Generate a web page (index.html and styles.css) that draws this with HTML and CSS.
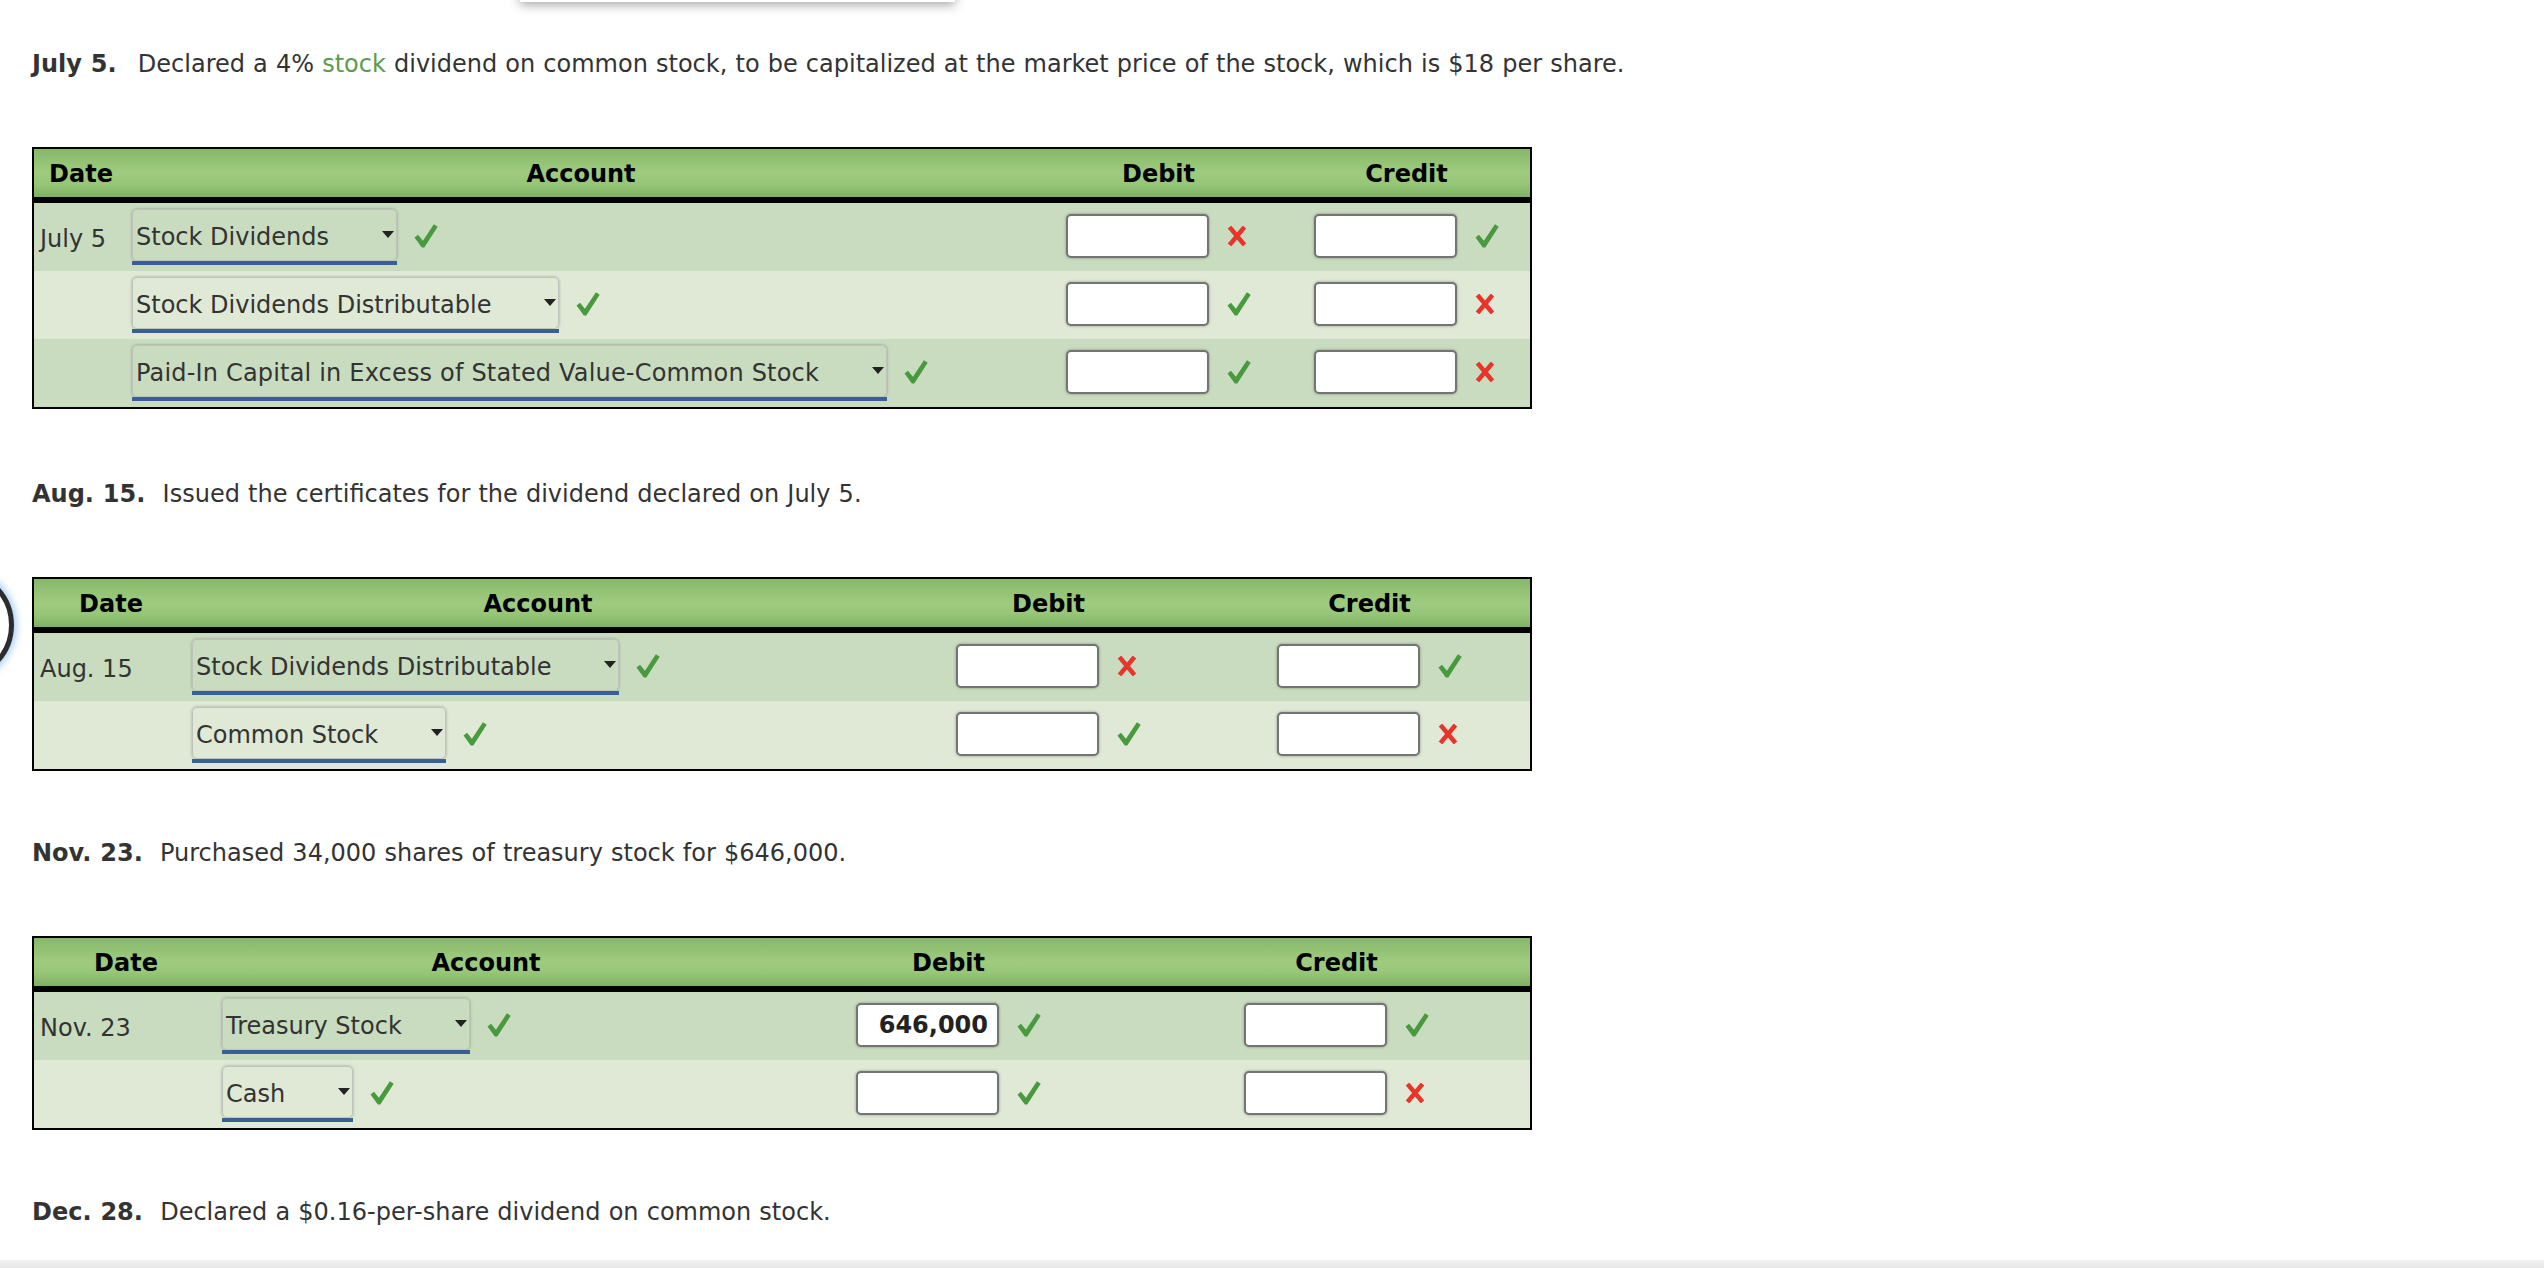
FILE: index.html
```html
<!DOCTYPE html>
<html lang="en">
<head>
<meta charset="utf-8">
<title>Journal entries</title>
<link rel="stylesheet" href="styles.css">
</head>
<body>
<div class="top-popup"></div>
<div class="focus-ring"></div>

<main class="page">
  <p class="prompt"><b class="wide">July 5.</b>&nbsp; Declared a 4% <span class="term">stock</span> dividend on common stock, to be capitalized at the market price of the stock, which is $18 per share.</p>
  <table class="journal j1">
    <colgroup><col class="c-date"><col class="c-acct"><col class="c-debit"><col class="c-credit"></colgroup>
    <thead><tr><th>Date</th><th>Account</th><th>Debit</th><th>Credit</th></tr></thead>
    <tbody>
      <tr>
        <td class="date">July 5</td>
        <td><div class="cell acct"><span class="select">Stock Dividends<i class="caret"></i></span><svg class="mark ok" viewBox="0 0 24 24"><path d="M0.5 13.4 L4 10.7 L8.9 16.8 L19.9 0.3 L23.7 2.8 L10.3 23.6 L7.8 23.6 Z"/></svg></div></td>
        <td><div class="cell amt"><span class="input"></span><svg class="mark bad" viewBox="0 0 20 20"><path d="M2.5 1 Q10 10 17.5 19 M17.5 1 Q10 10 2.5 19"/></svg></div></td>
        <td><div class="cell amt"><span class="input"></span><svg class="mark ok" viewBox="0 0 24 24"><path d="M0.5 13.4 L4 10.7 L8.9 16.8 L19.9 0.3 L23.7 2.8 L10.3 23.6 L7.8 23.6 Z"/></svg></div></td>
      </tr>
      <tr>
        <td class="date"></td>
        <td><div class="cell acct"><span class="select">Stock Dividends Distributable<i class="caret"></i></span><svg class="mark ok" viewBox="0 0 24 24"><path d="M0.5 13.4 L4 10.7 L8.9 16.8 L19.9 0.3 L23.7 2.8 L10.3 23.6 L7.8 23.6 Z"/></svg></div></td>
        <td><div class="cell amt"><span class="input"></span><svg class="mark ok" viewBox="0 0 24 24"><path d="M0.5 13.4 L4 10.7 L8.9 16.8 L19.9 0.3 L23.7 2.8 L10.3 23.6 L7.8 23.6 Z"/></svg></div></td>
        <td><div class="cell amt"><span class="input"></span><svg class="mark bad" viewBox="0 0 20 20"><path d="M2.5 1 Q10 10 17.5 19 M17.5 1 Q10 10 2.5 19"/></svg></div></td>
      </tr>
      <tr>
        <td class="date"></td>
        <td><div class="cell acct"><span class="select long">Paid-In Capital in Excess of Stated Value-Common Stock<i class="caret"></i></span><svg class="mark ok" viewBox="0 0 24 24"><path d="M0.5 13.4 L4 10.7 L8.9 16.8 L19.9 0.3 L23.7 2.8 L10.3 23.6 L7.8 23.6 Z"/></svg></div></td>
        <td><div class="cell amt"><span class="input"></span><svg class="mark ok" viewBox="0 0 24 24"><path d="M0.5 13.4 L4 10.7 L8.9 16.8 L19.9 0.3 L23.7 2.8 L10.3 23.6 L7.8 23.6 Z"/></svg></div></td>
        <td><div class="cell amt"><span class="input"></span><svg class="mark bad" viewBox="0 0 20 20"><path d="M2.5 1 Q10 10 17.5 19 M17.5 1 Q10 10 2.5 19"/></svg></div></td>
      </tr>
    </tbody>
  </table>

  <p class="prompt"><b>Aug. 15.</b>&nbsp; Issued the certificates for the dividend declared on July 5.</p>
  <table class="journal j2">
    <colgroup><col class="c-date"><col class="c-acct"><col class="c-debit"><col class="c-credit"></colgroup>
    <thead><tr><th>Date</th><th>Account</th><th>Debit</th><th>Credit</th></tr></thead>
    <tbody>
      <tr>
        <td class="date">Aug. 15</td>
        <td><div class="cell acct"><span class="select">Stock Dividends Distributable<i class="caret"></i></span><svg class="mark ok" viewBox="0 0 24 24"><path d="M0.5 13.4 L4 10.7 L8.9 16.8 L19.9 0.3 L23.7 2.8 L10.3 23.6 L7.8 23.6 Z"/></svg></div></td>
        <td><div class="cell amt"><span class="input"></span><svg class="mark bad" viewBox="0 0 20 20"><path d="M2.5 1 Q10 10 17.5 19 M17.5 1 Q10 10 2.5 19"/></svg></div></td>
        <td><div class="cell amt"><span class="input"></span><svg class="mark ok" viewBox="0 0 24 24"><path d="M0.5 13.4 L4 10.7 L8.9 16.8 L19.9 0.3 L23.7 2.8 L10.3 23.6 L7.8 23.6 Z"/></svg></div></td>
      </tr>
      <tr>
        <td class="date"></td>
        <td><div class="cell acct"><span class="select">Common Stock<i class="caret"></i></span><svg class="mark ok" viewBox="0 0 24 24"><path d="M0.5 13.4 L4 10.7 L8.9 16.8 L19.9 0.3 L23.7 2.8 L10.3 23.6 L7.8 23.6 Z"/></svg></div></td>
        <td><div class="cell amt"><span class="input"></span><svg class="mark ok" viewBox="0 0 24 24"><path d="M0.5 13.4 L4 10.7 L8.9 16.8 L19.9 0.3 L23.7 2.8 L10.3 23.6 L7.8 23.6 Z"/></svg></div></td>
        <td><div class="cell amt"><span class="input"></span><svg class="mark bad" viewBox="0 0 20 20"><path d="M2.5 1 Q10 10 17.5 19 M17.5 1 Q10 10 2.5 19"/></svg></div></td>
      </tr>
    </tbody>
  </table>

  <p class="prompt"><b>Nov. 23.</b>&nbsp; Purchased 34,000 shares of treasury stock for $646,000.</p>
  <table class="journal j3">
    <colgroup><col class="c-date"><col class="c-acct"><col class="c-debit"><col class="c-credit"></colgroup>
    <thead><tr><th>Date</th><th>Account</th><th>Debit</th><th>Credit</th></tr></thead>
    <tbody>
      <tr>
        <td class="date">Nov. 23</td>
        <td><div class="cell acct"><span class="select">Treasury Stock<i class="caret"></i></span><svg class="mark ok" viewBox="0 0 24 24"><path d="M0.5 13.4 L4 10.7 L8.9 16.8 L19.9 0.3 L23.7 2.8 L10.3 23.6 L7.8 23.6 Z"/></svg></div></td>
        <td><div class="cell amt"><span class="input">646,000</span><svg class="mark ok" viewBox="0 0 24 24"><path d="M0.5 13.4 L4 10.7 L8.9 16.8 L19.9 0.3 L23.7 2.8 L10.3 23.6 L7.8 23.6 Z"/></svg></div></td>
        <td><div class="cell amt"><span class="input"></span><svg class="mark ok" viewBox="0 0 24 24"><path d="M0.5 13.4 L4 10.7 L8.9 16.8 L19.9 0.3 L23.7 2.8 L10.3 23.6 L7.8 23.6 Z"/></svg></div></td>
      </tr>
      <tr>
        <td class="date"></td>
        <td><div class="cell acct"><span class="select">Cash<i class="caret"></i></span><svg class="mark ok" viewBox="0 0 24 24"><path d="M0.5 13.4 L4 10.7 L8.9 16.8 L19.9 0.3 L23.7 2.8 L10.3 23.6 L7.8 23.6 Z"/></svg></div></td>
        <td><div class="cell amt"><span class="input"></span><svg class="mark ok" viewBox="0 0 24 24"><path d="M0.5 13.4 L4 10.7 L8.9 16.8 L19.9 0.3 L23.7 2.8 L10.3 23.6 L7.8 23.6 Z"/></svg></div></td>
        <td><div class="cell amt"><span class="input"></span><svg class="mark bad" viewBox="0 0 20 20"><path d="M2.5 1 Q10 10 17.5 19 M17.5 1 Q10 10 2.5 19"/></svg></div></td>
      </tr>
    </tbody>
  </table>

  <p class="prompt"><b>Dec. 28.</b>&nbsp; Declared a $0.16-per-share dividend on common stock.</p>
</main>

<div class="bottom-bar"></div>
</body>
</html>
```

FILE: styles.css
```css
html, body {
  margin: 0;
  padding: 0;
  background: #ffffff;
}

body {
  font-family: "DejaVu Sans", Verdana, sans-serif;
  font-size: 24px;
  color: #333333;
  overflow: hidden;
}

.page {
  padding: 50px 0 0 32px;
}

.prompt {
  margin: 0 0 69px 0;
  line-height: 28px;
  white-space: nowrap;
  word-spacing: 0.5px;
}

.prompt b {
  font-weight: bold;
  color: #333333;
  margin-right: 1px;
}

.prompt b.wide {
  margin-right: 5px;
}

.term {
  color: #5d9b4c;
}

/* ---------- journal table ---------- */
.journal {
  width: 1500px;
  table-layout: fixed;
  border-collapse: separate;
  border-spacing: 0;
  border: 2px solid #000;
  margin: 0 0 68px 0;
}

.journal.j1 {
  margin-bottom: 71px;
}

.j1 .c-date { width: 94px; }
.j1 .c-acct { width: 906px; }
.j1 .c-debit { width: 249px; }
.j1 .c-credit { width: 247px; }

.j2 .c-date { width: 154px; }
.j2 .c-acct { width: 700px; }
.j2 .c-debit { width: 321px; }
.j2 .c-credit { width: 321px; }

.j3 .c-date { width: 184px; }
.j3 .c-acct { width: 536px; }
.j3 .c-debit { width: 389px; }
.j3 .c-credit { width: 387px; }

.journal th {
  padding: 3px 0 0 0;
  line-height: 45px;
  font-weight: bold;
  color: #000;
  text-align: center;
  background: linear-gradient(#86b867 0%, #96c477 30%, #9fcb7f 50%, #97c679 72%, #80b162 100%);
  border-bottom: 6px solid #000;
}

.journal td {
  padding: 0;
  height: 68px;
  vertical-align: middle;
}

.journal tbody tr:nth-child(odd) td {
  background: #c9dcc0;
}

.journal tbody tr:nth-child(even) td {
  background: #dfe9d5;
}

.journal td.date {
  padding: 3px 0 0 6px;
  height: 65px;
  color: #333;
  white-space: nowrap;
}

.cell {
  display: flex;
  align-items: center;
}

.cell.acct {
  padding-left: 4px;
}

.cell.amt {
  justify-content: center;
}

/* ---------- dropdown ---------- */
.select {
  position: relative;
  display: inline-flex;
  align-items: center;
  box-sizing: border-box;
  height: 52px;
  padding: 4px 2px 0 3px;
  margin-bottom: 4px;
  border: 1px solid #bfc3bc;
  border-radius: 5px;
  box-shadow: 0 0 3px rgba(0, 0, 0, 0.3);
  color: #333;
  white-space: nowrap;
}

.select.long {
  letter-spacing: 0.18px;
}

.select::after {
  content: "";
  position: absolute;
  left: -1px;
  right: -1px;
  bottom: -5px;
  height: 4px;
  background: #3a5f93;
}

.caret {
  display: block;
  width: 0;
  height: 0;
  margin-left: 53px;
  margin-top: -6px;
  border-left: 6px solid transparent;
  border-right: 6px solid transparent;
  border-top: 7px solid #222;
}

/* ---------- amount inputs ---------- */
.input {
  display: block;
  box-sizing: border-box;
  width: 143px;
  height: 44px;
  margin-bottom: 2px;
  padding: 1px 9px 0 0;
  border: 2px solid #747474;
  border-radius: 5px;
  background: #fff;
  box-shadow: 0 0 3px rgba(0, 0, 0, 0.35);
  font-weight: bold;
  color: #222;
  text-align: right;
  line-height: 39px;
}

/* ---------- marks ---------- */
.mark {
  flex: none;
  display: block;
  margin-bottom: 2px;
}

.mark.ok {
  width: 24px;
  height: 24px;
  fill: #49993f;
}

.cell.acct .mark.ok {
  margin-left: 17px;
}

.cell.amt .mark {
  margin-left: 18px;
}

.mark.bad {
  width: 20px;
  height: 20px;
  margin-right: 4px;
  fill: none;
  stroke: #e8352b;
  stroke-width: 4.5;
}

/* ---------- overlays ---------- */
.top-popup {
  position: absolute;
  left: 520px;
  top: -40px;
  width: 435px;
  height: 42px;
  background: #fff;
  box-shadow: 0 3px 10px rgba(0, 0, 0, 0.35);
}

.focus-ring {
  position: absolute;
  left: -98px;
  top: 569px;
  width: 102px;
  height: 102px;
  border: 5px solid #2c2c2c;
  border-radius: 50%;
  box-shadow: 0 0 6px 3px rgba(120, 180, 255, 0.6);
}

.bottom-bar {
  position: fixed;
  left: 0;
  right: 0;
  bottom: 0;
  height: 8px;
  background: linear-gradient(#f3f3f3, #e6e6e6);
}
```
